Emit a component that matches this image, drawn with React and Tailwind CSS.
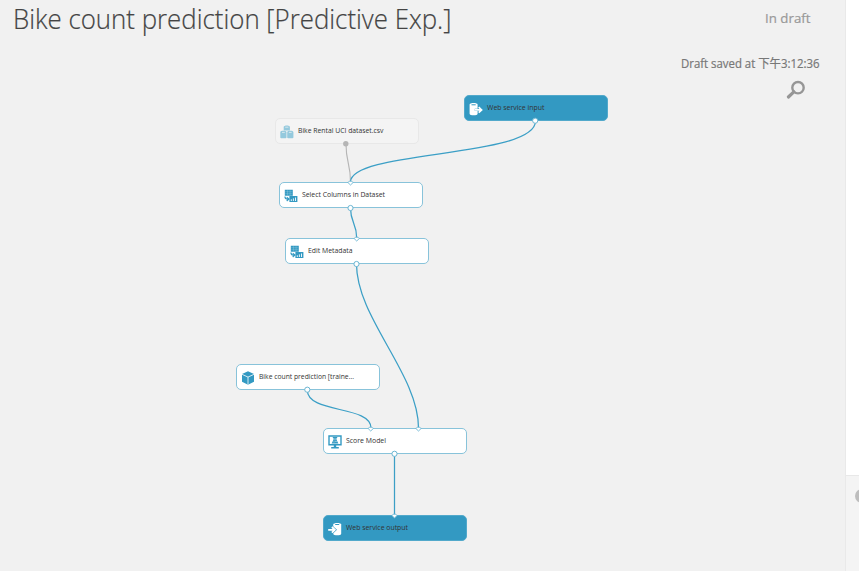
import React from 'react';

const BLUE = '#3399c2';

function DatasetIcon() {
  return (
    <svg width="14" height="14" viewBox="0 0 14 14" fill="#94c9dd">
      <path d="M3.7 2c0-2 6.2-2 6.2 0v3.5H3.7z" />
      <path d="M.3 7.2c0-1.9 6.2-1.9 6.2 0v5.2c0 1.2-6.2 1.2-6.2 0zM7.2 7.2c0-1.9 6.2-1.9 6.2 0v5.2c0 1.2-6.2 1.2-6.2 0z" />
      <path d="M5.2 2.2h3.2M2 7.4h2.8M8.9 7.4h2.8" stroke="#f4f4f4" strokeWidth="0.7" />
    </svg>
  );
}

function InputIcon() {
  return (
    <svg width="14" height="14" viewBox="0 0 14 14" fill="#fff">
      <path d="M.6 2.5C.6.5 8.6.5 8.6 2.5v9.2c0 2-8 2-8 0z" />
      <path d="M2.5 2.8h4.2" stroke={BLUE} strokeWidth="1" />
      <path d="M5.8 7.9h6.5M9.7 5l3 2.9-3 2.9" fill="none" stroke={BLUE} strokeWidth="2.4" />
      <path d="M6 7.9h6.5M9.7 5.1l2.9 2.8-2.9 2.8" fill="none" stroke="#fff" strokeWidth="1.7" />
    </svg>
  );
}

function OutputIcon() {
  return (
    <svg width="14" height="14" viewBox="0 0 14 14" fill="#fff">
      <path d="M5.2 2.5c0-2 8-2 8 0v9.2c0 2-8 2-8 0z" />
      <path d="M7.2 2.5h4" stroke={BLUE} strokeWidth="1" />
      <path d="M4.3 5l3 2.8-3 2.8" fill="none" stroke={BLUE} strokeWidth="2.3" />
      <path d="M.2 7.8h6.6M3.9 5l2.9 2.8-2.9 2.8" fill="none" stroke="#fff" strokeWidth="1.8" />
    </svg>
  );
}

function TransformIcon() {
  return (
    <svg width="14" height="14" viewBox="0 0 14 14" fill={BLUE}>
      <path d="M.8.8h8v6h-8zM5.4 7h8v6h-8z" />
      <path d="M1.2 2.7h7.2M1.2 4.7h7.2M3.5 1.2v5.3M6.1 1.2v5.3" stroke="#9fd0e3" strokeWidth="0.35" />
      <path d="M7.3 12V10.3M9.4 12V9.4M11.5 12V8.5" stroke="#fff" strokeWidth="0.9" />
      <path d="M.9 7.6c0 2 1 2.7 3 2.7M2.7 8.1L5 10l-2.3 2" fill="none" stroke={BLUE} strokeWidth="1.1" />
    </svg>
  );
}

function ModelIcon() {
  return (
    <svg width="14" height="14" viewBox="0 0 14 14" fill={BLUE}>
      <path d="M7 .2l6 2.8v7.8L7 13.8l-6-3V3z" />
      <path d="M1 3.3l6 2.8 6-2.8M7 6.1v7.5" fill="none" stroke="#fff" strokeWidth="0.8" />
    </svg>
  );
}

function ScoreIcon() {
  return (
    <svg width="14" height="14" viewBox="0 0 14 14" fill={BLUE}>
      <path d="M1 1h12v8.8H1z" fill="none" stroke={BLUE} strokeWidth="1.4" />
      <path d="M4.8 2h4.4v1h-.7v1.8l1.9 3.6H3.6l1.9-3.6V3h-.7z" />
      <path d="M6.7 3.2h.6v2h-.6zM5.6 6.5h.8v.8h-.8zM7.6 6.1h.8v.8h-.8z" fill="#fff" />
      <path d="M5.8 10h2.4v2h2.6v1.4H3.2V12h2.6z" />
    </svg>
  );
}

const nodes = [
  { pos: 'left-[274.5px] top-[118px]', look: 'border-[#e8e8e8] bg-[#f4f4f4]', Icon: DatasetIcon, label: 'Bike Rental UCI dataset.csv', width: 85.5 },
  { pos: 'left-[463.5px] top-[95px]', look: 'border-[#52a9cb] bg-[#3399c2]', Icon: InputIcon, label: 'Web service input', width: 57.5 },
  { pos: 'left-[279px] top-[182px]', look: 'border-[#88c3da] bg-white', Icon: TransformIcon, label: 'Select Columns in Dataset', width: 83 },
  { pos: 'left-[285px] top-[238px]', look: 'border-[#88c3da] bg-white', Icon: TransformIcon, label: 'Edit Metadata', width: 44.5 },
  { pos: 'left-[236px] top-[364px]', look: 'border-[#88c3da] bg-white', Icon: ModelIcon, label: 'Bike count prediction [traine...', width: 95 },
  { pos: 'left-[323px] top-[428px]', look: 'border-[#88c3da] bg-white', Icon: ScoreIcon, label: 'Score Model', width: 40 },
  { pos: 'left-[323px] top-[515px]', look: 'border-[#52a9cb] bg-[#3399c2]', Icon: OutputIcon, label: 'Web service output', width: 62 },
];

function FittedText({ children, width, size, weight, color, heft = 0 }) {
  return (
    <svg width={width} height={size * 1.4} className="block shrink-0 overflow-visible">
      <text
        x="0"
        y={size * 1.07}
        textLength={width}
        lengthAdjust="spacingAndGlyphs"
        fontFamily="'Open Sans', 'Noto Sans', 'Noto Sans CJK TC', sans-serif"
        fontSize={size}
        fontWeight={weight}
        fill={color}
        stroke={color}
        strokeWidth={heft}
      >
        {children}
      </text>
    </svg>
  );
}

function Node({ pos, look, Icon, label, width }) {
  return (
    <div className={`absolute flex h-[26px] w-[144px] items-center rounded-[5px] border pl-[4px] ${pos} ${look}`}>
      <span className="mt-px shrink-0"><Icon /></span>
      <span className="-mt-[2px] ml-[4px]">
        <FittedText width={width} size={7.2} weight={400} color="#333333">{label}</FittedText>
      </span>
    </div>
  );
}

const wires = [
  'M535.5 121C535.5 158 350.5 150 350.5 182',
  'M350.5 208C350.5 223 356.7 223 356.7 238',
  'M356.5 264C356.5 318 418.5 374 418.5 428',
  'M307.3 390C307.3 414 371 405 371 428',
  'M394.5 454V515',
];
const outlets = [[535.2, 120.7], [350.5, 208], [356.5, 264], [307.3, 389.7], [394.5, 453.8]];
const inlets = [[350.5, 183], [356.7, 239], [370.7, 429], [418.5, 429], [394.5, 516]];

export default function App() {
  return (
    <main className="flex h-[571px] w-[859px] overflow-hidden bg-[#f1f1f1]">
      <section className="relative w-[845px] shrink-0">
        <header className="flex justify-between pr-[35px] pl-[12.5px]">
          <h1 className="-mt-[0.5px]"><FittedText width={438.5} size={27.5} weight={300} color="#444444" heft={0.2}>Bike count prediction [Predictive Exp.]</FittedText></h1>
          <div className="mt-[9px]"><FittedText width={45.5} size={13.5} weight={400} color="#999999" heft={0.2}>In draft</FittedText></div>
        </header>
        <div className="mt-[16.5px] flex justify-end pr-[25.5px]">
          <FittedText width={138.5} size={12} weight={400} color="#777777" heft={0.2}>Draft saved at 下午3:12:36</FittedText>
        </div>
        <svg className="absolute top-[80px] left-[786px]" width="20" height="20" fill="none" stroke="#969696">
          <circle cx="12" cy="7.7" r="5.7" strokeWidth="2.4" />
          <path d="M7.8 11.8L2.4 17" strokeWidth="3.2" strokeLinecap="round" />
        </svg>
        {nodes.map((node) => <Node key={node.label} {...node} />)}
        <svg className="absolute inset-0" width="845" height="571" fill="none">
          <path d="M346 144C346 163 350.5 163 350.5 182" stroke="#b5b5b5" strokeWidth="1.1" />
          {wires.map((d) => <path key={d} d={d} stroke="#3b9fc6" strokeWidth="1.25" />)}
          <circle cx="345.8" cy="143.7" r="2.7" fill="#b5b5b5" />
          {outlets.map(([x, y]) => <circle key={x} cx={x} cy={y} r="2.6" fill="#fff" stroke="#6bb5d2" />)}
          {inlets.map(([x, y]) => (
            <path key={x} d={`M${x - 2.6} ${y - 0.5}L${x - 1.3} ${y - 1.8}H${x + 1.3}L${x + 2.6} ${y - 0.5}L${x} ${y + 2}Z`} fill="#fff" stroke="#6bb5d2" strokeWidth="0.9" />
          ))}
        </svg>
      </section>
      <aside className="flex w-[14px] flex-col border-l border-[#e9e9e9] bg-[#f4f4f4]">
        <div className="h-[476px] border-b border-[#e8e8e8] bg-white" />
        <div className="mt-[13px] ml-[9px] size-[14px] shrink-0 rounded-full bg-[#bdbdbd]" />
      </aside>
    </main>
  );
}
